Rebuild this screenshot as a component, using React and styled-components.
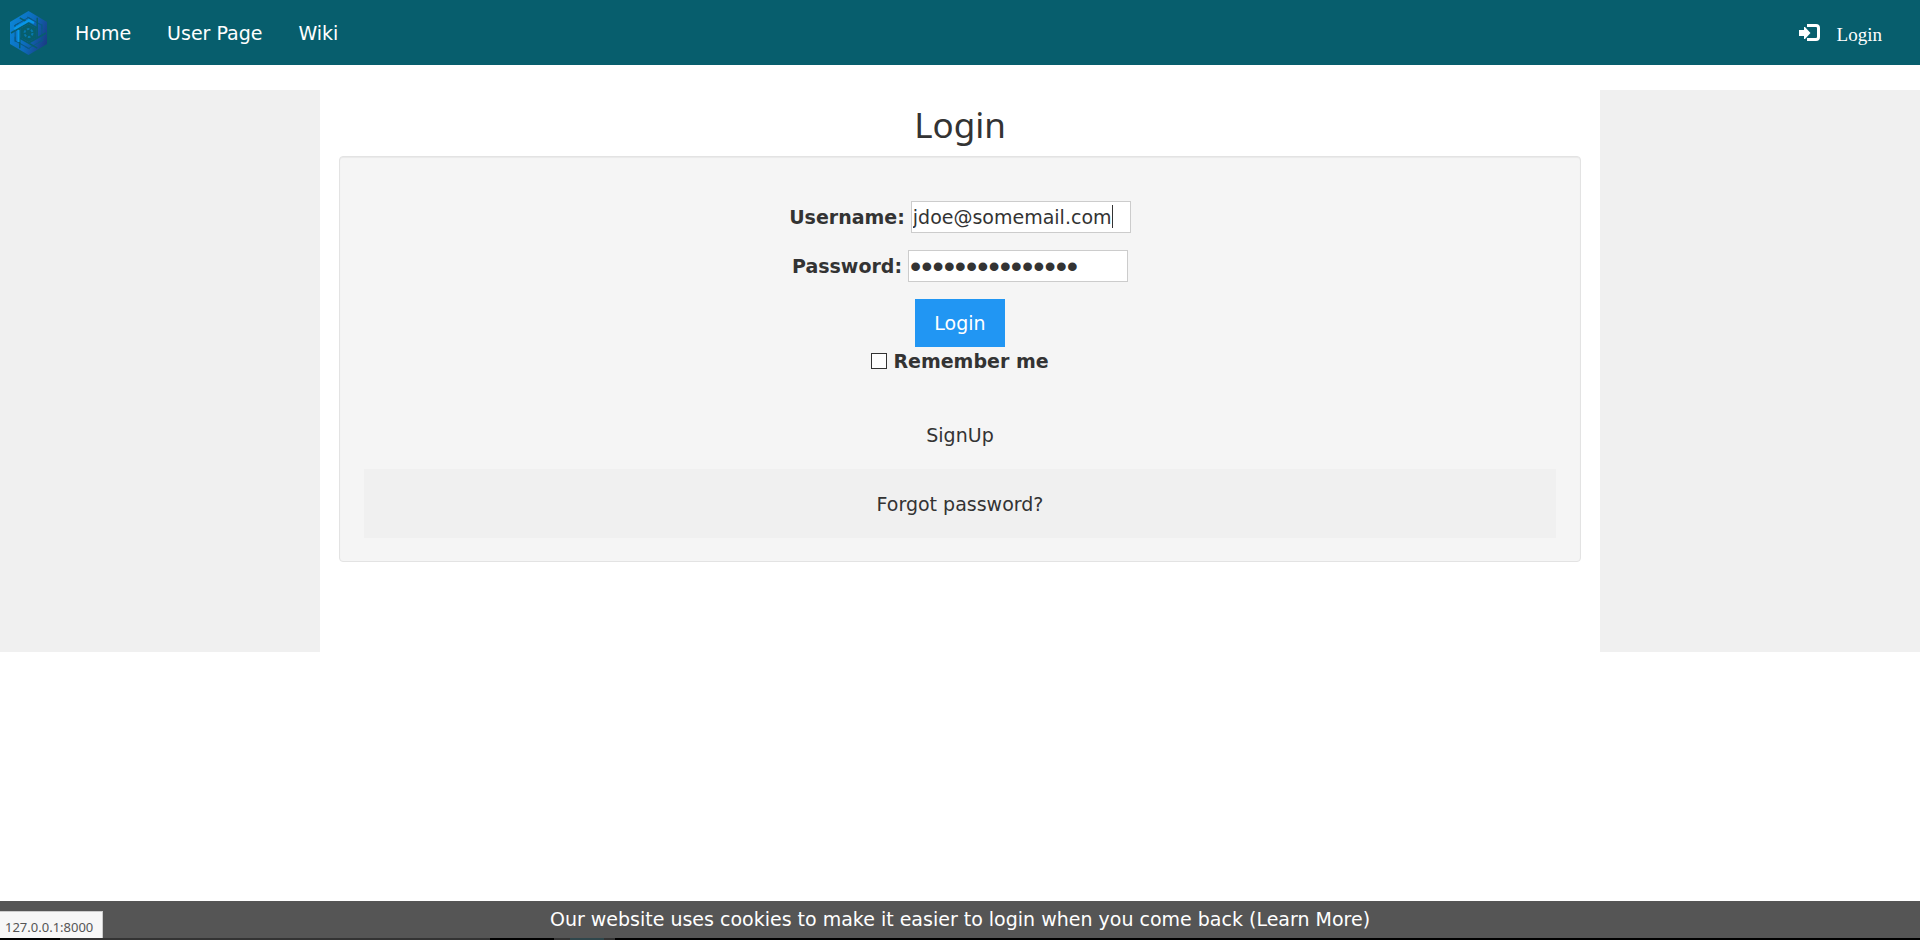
import React from "react";
import styled, { createGlobalStyle } from "styled-components";

const GlobalStyle = createGlobalStyle`
  *, *::before, *::after { box-sizing: border-box; }
  html { height: 100%; }
  body {
    margin: 0;
    min-height: 100%;
    background: #fff;
    color: #333;
    font-family: Verdana, "DejaVu Sans", sans-serif;
    font-size: 19px;
    line-height: 27px;
  }
  #root { min-height: 100vh; display: flex; flex-direction: column; }
`;

const Navbar = styled.nav`
  display: flex;
  align-items: center;
  height: 65px;
  padding: 0 38px 0 8px;
  background: #075e6d;
  color: #fff;
`;

const BrandLink = styled.a`
  display: block;
  width: 40px;
  height: 46px;
  margin-right: 27px;
  svg { display: block; }
`;

const NavLinks = styled.div`
  display: flex;
  flex: 1;
  gap: 36px;
  padding-top: 2px;
`;

const NavLink = styled.a`
  color: inherit;
  text-decoration: none;
`;

const LoginLink = styled(NavLink)`
  display: flex;
  align-items: center;
  gap: 16px;
  font-family: "Liberation Serif", serif;
  svg { display: block; }
`;

const LoginText = styled.span`
  padding-top: 4px;
`;

const Content = styled.div`
  display: grid;
  grid-template-columns: 1fr 4fr 1fr;
  min-height: 562px;
  margin-top: 25px;
`;

const SidePanel = styled.aside`
  background: #f0f0f0;
`;

const Main = styled.main`
  padding: 15px 19px 0;
`;

const Title = styled.h1`
  margin: 0 0 11px;
  font-family: "Noto Sans", sans-serif;
  font-size: 35px;
  font-weight: 400;
  line-height: 40px;
  text-align: center;
`;

const Well = styled.section`
  display: flex;
  flex-direction: column;
  padding: 44px 24px 23px;
  border: 1px solid #e3e3e3;
  border-radius: 4px;
  background: #f5f5f5;
  box-shadow: inset 0 1px 1px rgba(0, 0, 0, 0.05);
`;

const Form = styled.form`
  display: flex;
  flex-direction: column;
  align-items: center;
`;

const Field = styled.div`
  display: flex;
  align-items: center;
  gap: 6px;
  margin-bottom: 17px;
`;

const Label = styled.label`
  font-weight: 700;
`;

const InputFrame = styled.span`
  position: relative;
  display: flex;
`;

const Caret = styled.span`
  position: absolute;
  top: 4px;
  left: 201px;
  width: 1px;
  height: 23px;
  background: #333;
`;

const TextInput = styled.input`
  width: 220px;
  height: 32px;
  padding: 1px;
  border: 1px solid #ccc;
  border-radius: 0;
  outline: none;
  background: #fff;
  color: #333;
  font: inherit;
`;

const PasswordInput = styled(TextInput)`
  font-family: "Liberation Sans", sans-serif;
  font-size: 32px;
`;

const SubmitButton = styled.button`
  height: 48px;
  padding: 0 19px;
  border: 0;
  background: #2196f3;
  color: #fff;
  font: inherit;
`;

const Remember = styled.div`
  display: flex;
  align-items: center;
  gap: 6px;
  height: 28px;
`;

const Checkbox = styled.input`
  appearance: none;
  width: 16px;
  height: 16px;
  margin: 0;
  border: 1px solid #333;
  background: #fff;
`;

const Links = styled.div`
  display: flex;
  flex-direction: column;
  margin-top: 25px;
`;

const PanelLink = styled.a`
  padding: 22px 16px 20px;
  background: ${({ $shaded }) => ($shaded ? "#f0f0f0" : "transparent")};
  color: inherit;
  text-align: center;
  text-decoration: none;
`;

const BottomArea = styled.footer`
  display: flex;
  flex-direction: column;
  margin-top: auto;
  position: relative;
`;

const CookieBar = styled.div`
  padding: 5px 16px;
  background: #555;
  color: #fff;
  text-align: center;
`;

const Strip = styled.div`
  display: flex;
  height: 2px;
  background: #000;
`;

const StripSegment = styled.span`
  flex: ${({ $size }) => $size};
  background: ${({ $color }) => $color};
`;

const StatusBubble = styled.div`
  position: absolute;
  left: 0;
  bottom: 2px;
  height: 27px;
  padding: 5px 9px 0 5px;
  border-top: 1px solid #ccc;
  border-right: 1px solid #ccc;
  background: #f7f7f7;
  color: #555;
  font-family: "Noto Sans", sans-serif;
  font-size: 13px;
  line-height: 20px;
`;

const ROTATIONS = [0, 60, 120, 180, 240, 300];

const STRIP_SEGMENTS = [
  { size: 60, color: "#000" },
  { size: 430, color: "#333" },
  { size: 64, color: "#000" },
  { size: 16, color: "#333" },
  { size: 34, color: "#2f464b" },
  { size: 11, color: "#333" },
  { size: 1305, color: "#000" },
];

function Logo() {
  return (
    <svg width="40" height="46" viewBox="0 0 40 46" aria-hidden="true">
      <defs>
        <linearGradient id="blade" x1="0" y1="0.3" x2="1" y2="0.7">
          <stop offset="0" stopColor="#0b84d6" />
          <stop offset="0.5" stopColor="#0d6cbc" />
          <stop offset="1" stopColor="#1a3c84" />
        </linearGradient>
      </defs>
      <path d="M20.5 1 39 12V34L20.500 45 2 34V12Z" fill="url(#blade)" />
      {ROTATIONS.map((angle) => (
        <g key={angle} transform={`rotate(${angle} 20.500 23)`} fill="none">
          <path d="M24 9.500 20.500 7.500 6 16" stroke="#0a5a86" strokeWidth="1" />
          <path d="M20.500 13 3 23" stroke="#075e6d" strokeWidth="1.500" />
        </g>
      ))}
      <path d="M20.500 14 28.500 18.500V27.500L20.500 32 12.500 27.500V18.500Z" fill="#075e6d" />
      <path d="M26 13 21 10.500 6 19" fill="none" stroke="#0896e8" strokeWidth="2.500" />
      <path d="M10.500 20V32" stroke="#0896e8" strokeWidth="2" />
      <circle cx="20.500" cy="23" r="4" fill="none" stroke="#0878ac" strokeWidth="2" strokeDasharray="2.600 1.580" />
    </svg>
  );
}

function SignInIcon() {
  return (
    <svg width="22" height="18" viewBox="0 0 22 18" aria-hidden="true">
      <path d="M0 6H5V3H6L11.500 9 6 15H5V12H0Z" fill="#fff" />
      <path d="M8 1.500H17Q19.500 1.500 19.500 4V13Q19.500 15.500 17 15.500H8" fill="none" stroke="#fff" strokeWidth="3" />
    </svg>
  );
}

export default function App() {
  return (
    <>
      <GlobalStyle />
      <Navbar>
        <BrandLink href="#" aria-label="Main page"><Logo /></BrandLink>
        <NavLinks>
          <NavLink href="#">Home</NavLink>
          <NavLink href="#">User Page</NavLink>
          <NavLink href="#">Wiki</NavLink>
        </NavLinks>
        <LoginLink href="#"><SignInIcon /><LoginText>Login</LoginText></LoginLink>
      </Navbar>
      <Content>
        <SidePanel />
        <Main>
          <Title>Login</Title>
          <Well>
            <Form onSubmit={(event) => event.preventDefault()}>
              <Field>
                <Label htmlFor="username">Username:</Label>
                <InputFrame>
                  <TextInput id="username" type="text" defaultValue="jdoe@somemail.com" />
                  <Caret />
                </InputFrame>
              </Field>
              <Field>
                <Label htmlFor="password">Password:</Label>
                <PasswordInput id="password" type="password" defaultValue="somepassword123" />
              </Field>
              <SubmitButton type="submit">Login</SubmitButton>
              <Remember>
                <Checkbox id="remember" type="checkbox" />
                <Label htmlFor="remember">Remember me</Label>
              </Remember>
            </Form>
            <Links>
              <PanelLink href="#">SignUp</PanelLink>
              <PanelLink href="#" $shaded>Forgot password?</PanelLink>
            </Links>
          </Well>
        </Main>
        <SidePanel />
      </Content>
      <BottomArea>
        <CookieBar>Our website uses cookies to make it easier to login when you come back (<NavLink href="#">Learn More</NavLink>)</CookieBar>
        <Strip>
          {STRIP_SEGMENTS.map(({ size, color }, index) => (
            <StripSegment key={index} $size={size} $color={color} />
          ))}
        </Strip>
        <StatusBubble>127.0.0.1:8000</StatusBubble>
      </BottomArea>
    </>
  );
}
